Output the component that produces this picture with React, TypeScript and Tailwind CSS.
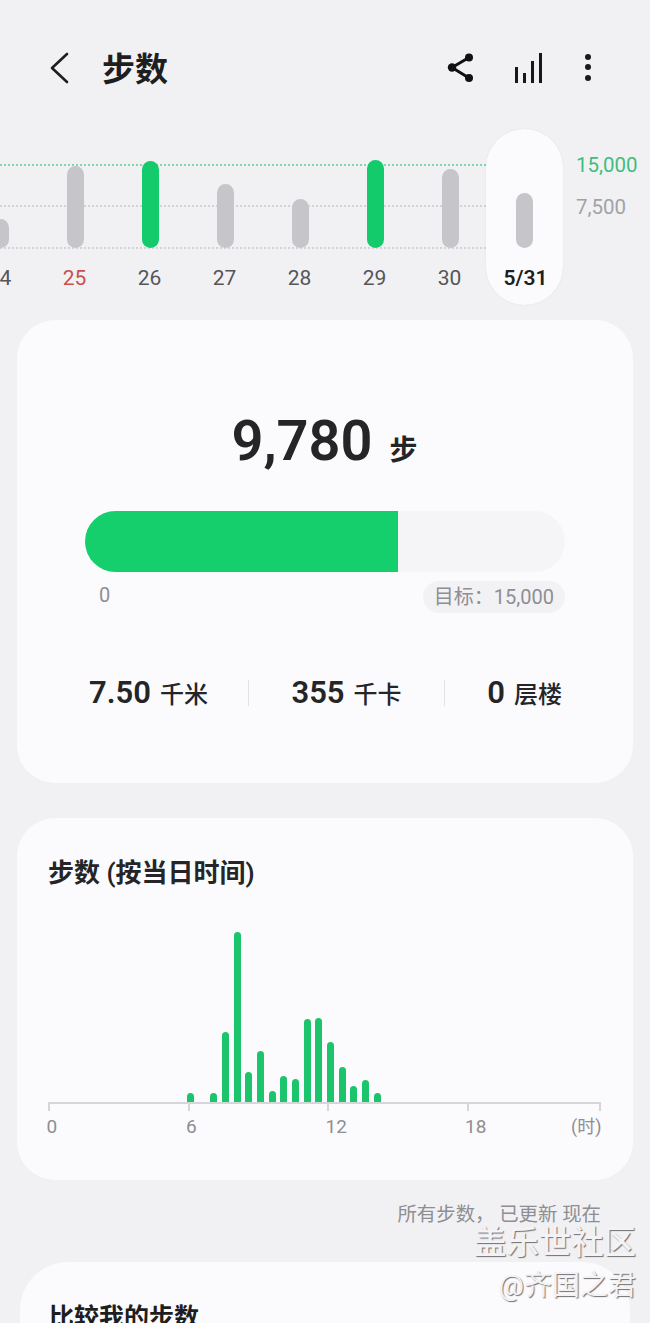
const FONT = "font-['Roboto','Noto_Sans_CJK_SC',sans-serif]";

const days = [
  { label: "24", top: 219, green: false, color: "text-[#55555a]" },
  { label: "25", top: 166, green: false, color: "text-[#c8504f]" },
  { label: "26", top: 161, green: true, color: "text-[#55555a]" },
  { label: "27", top: 184, green: false, color: "text-[#55555a]" },
  { label: "28", top: 199, green: false, color: "text-[#55555a]" },
  { label: "29", top: 160, green: true, color: "text-[#55555a]" },
  { label: "30", top: 169, green: false, color: "text-[#55555a]" },
];

const hourly = [9, 0, 9, 70, 170, 30, 51, 11, 26, 23, 83, 84, 60, 35, 16, 22, 9];
const ticks = ["0", "6", "12", "18"];

function Stat({ value, unit }: { value: string; unit: string }) {
  return (
    <div className="flex items-baseline gap-[9px] text-[#252528]">
      <span className="text-[31px] font-semibold leading-none">{value}</span>
      <span className="text-[24px] font-medium leading-none">{unit}</span>
    </div>
  );
}

export default function App() {
  return (
    <div className={`relative h-[1323px] w-[650px] overflow-hidden bg-[#f1f1f4] ${FONT}`}>
      {/* Header */}
      <header className="flex h-[129px] items-start pl-[50px] pr-[58px] pt-[50px]">
        <svg width="19" height="32" viewBox="0 0 19 32" className="mt-[2px] text-[#1e1e20]" fill="none" stroke="currentColor" strokeWidth="2.6" strokeLinecap="round" strokeLinejoin="round">
          <path d="M17 2 L2 16 L17 30" />
        </svg>
        <h1 className="ml-[33px] mt-[1px] text-[33px] font-semibold leading-[38px] text-[#1e1e20]">步数</h1>
        <div className="ml-auto flex items-start">
          <svg width="26" height="30" viewBox="0 0 26 30" className="mt-[3px] text-[#111113]" fill="currentColor" stroke="currentColor">
            <path d="M22 4.5 L5 14.5 L22 25" fill="none" strokeWidth="3" />
            <circle cx="22" cy="4.5" r="4" stroke="none" />
            <circle cx="5" cy="14.5" r="4.2" stroke="none" />
            <circle cx="22" cy="25" r="4" stroke="none" />
          </svg>
          <svg width="28" height="32" viewBox="0 0 28 32" className="ml-[41px] mt-[3px] text-[#18181a]" fill="currentColor">
            <rect x="1" y="14" width="3" height="16" />
            <rect x="9" y="20" width="3" height="10" />
            <rect x="17" y="8" width="3" height="22" />
            <rect x="25" y="0" width="3" height="30" />
          </svg>
          <svg width="8" height="30" viewBox="0 0 8 30" className="ml-[42px] mt-[3px] text-[#1a1a1c]" fill="currentColor">
            <circle cx="4" cy="4" r="3" />
            <circle cx="4" cy="14" r="3" />
            <circle cx="4" cy="25" r="3" />
          </svg>
        </div>
      </header>

      {/* Weekly chart */}
      <section className="relative h-[191px]">
        <div className="absolute left-0 top-[35px] w-[486px] border-t-2 border-dotted border-[#7fd8a8]" />
        <div className="absolute left-0 top-[76px] w-[486px] border-t-2 border-dotted border-[#d2d2d6]" />
        <div className="absolute left-0 top-[118px] w-[486px] border-t-2 border-dotted border-[#d2d2d6]" />
        <div className="absolute left-[576px] top-[23px] text-[20.5px] leading-[26px] text-[#3fbd7f]">15,000</div>
        <div className="absolute left-[576px] top-[65px] text-[20.5px] leading-[26px] text-[#a2a2a6]">7,500</div>

        <div className="relative ml-[-37px] flex w-[602px]">
          {days.map((d) => (
            <div key={d.label} className="flex h-[176px] w-[75px] flex-col items-center">
              <div className="flex h-[119px] w-full items-end justify-center">
                <div
                  className={`w-[17px] rounded-full ${d.green ? "bg-[#14cb6c]" : "bg-[#c6c6ca]"}`}
                  style={{ height: 248 - d.top }}
                />
              </div>
              <span className={`mr-[2px] mt-[18px] text-[21px] leading-[24px] ${d.color}`}>{d.label}</span>
            </div>
          ))}
          <div className="ml-[-2px] flex h-[176px] w-[77px] flex-col items-center rounded-full bg-[#fbfbfd] shadow-[0_0_2px_rgba(0,0,0,0.08)]">
            <div className="flex h-[119px] w-full items-end justify-center">
              <div className="w-[17px] rounded-full bg-[#c6c6ca]" style={{ height: 55 }} />
            </div>
            <span className="ml-[2px] mt-[18px] text-[21px] font-semibold leading-[24px] text-[#1e1e20]">5/31</span>
          </div>
        </div>
      </section>

      {/* Summary card */}
      <section className="mx-[17px] h-[463px] rounded-[38px] bg-[#fbfbfd] px-[68px] pt-[90px]">
        <div className="flex items-baseline justify-center gap-[17px] pr-[1px] text-[#252528]">
          <span className="text-[56px] font-semibold leading-[62px]">9,780</span>
          <span className="text-[28px] font-semibold leading-none">步</span>
        </div>
        <div className="mt-[39px] h-[61px] w-[480px] overflow-hidden rounded-full bg-[#f5f5f8]">
          <div className="h-full w-[313px] bg-[#14cf6c]" />
        </div>
        <div className="mt-[9px] flex w-[480px] items-start justify-between">
          <span className="ml-[14px] text-[20px] leading-[28px] text-[#8e8e93]">0</span>
          <span className="rounded-full bg-[#f2f2f4] px-[11px] text-[20px] leading-[32px] text-[#8e8e93]">目标：15,000</span>
        </div>
        <div className="mt-[64px] flex w-[480px] items-center">
          <div className="flex w-[163px] justify-start pl-[4px]"><Stat value="7.50" unit="千米" /></div>
          <div className="h-[26px] w-px bg-[#e2e2e6]" />
          <div className="flex w-[195px] justify-center"><Stat value="355" unit="千卡" /></div>
          <div className="h-[26px] w-px bg-[#e2e2e6]" />
          <div className="flex flex-1 justify-end pr-[3px]"><Stat value="0" unit="层楼" /></div>
        </div>
      </section>

      {/* Hourly card */}
      <section className="mx-[17px] mt-[35px] h-[362px] rounded-[38px] bg-[#fbfbfd] pl-[31px] pr-[32px] pt-[37px]">
        <h2 className="text-[26px] font-semibold leading-[36px] text-[#252528]">步数 (按当日时间)</h2>
        <div className="mt-[41px] flex h-[170px] items-end gap-[4.67px] pl-[139px]">
          {hourly.map((h, i) => (
            <div key={i} className="w-[7px] rounded-t-full bg-[#1cc46c]" style={{ height: h }} />
          ))}
        </div>
        <div className="grid h-[9px] w-[553px] grid-cols-[139.5px_139.5px_139.5px_1fr] border-r-2 border-t-2 border-[#d6d6da]">
          {ticks.map((t) => (
            <div key={t} className="h-full border-l-2 border-[#d6d6da]" />
          ))}
        </div>
        <div className="relative ml-[-1.5px] mt-[3px] grid h-[26px] w-[553px] grid-cols-[139.5px_139.5px_139.5px_1fr] text-[19px] leading-[26px] text-[#8e8e93]">
          {ticks.map((t) => (
            <span key={t}>{t}</span>
          ))}
          <span className="absolute right-[-2px] top-0 text-[18px]">(时)</span>
        </div>
      </section>

      {/* Footer note */}
      <p className="mr-[49px] mt-[21px] text-right text-[19.4px] leading-[28px] text-[#8e8e93]">所有步数， 已更新 现在</p>

      {/* Compare card */}
      <section className="mx-[20px] mt-[33px] h-[200px] rounded-[48px] bg-[#fbfbfd] pl-[29px] pt-[38px]">
        <h2 className="text-[25px] font-semibold leading-[36px] text-[#1e1e20]">比较我的步数</h2>
      </section>

      {/* Watermark */}
      <div className="absolute right-[14px] top-[1224px] flex flex-col items-end text-[#f3f3f5] [text-shadow:1px_1px_1px_#6f6f74]">
        <span className="text-[32.4px] font-medium leading-[38px]">盖乐世社区</span>
        <span className="mt-[6px] text-[28px] leading-[36px]">@齐国之君</span>
      </div>
    </div>
  );
}
